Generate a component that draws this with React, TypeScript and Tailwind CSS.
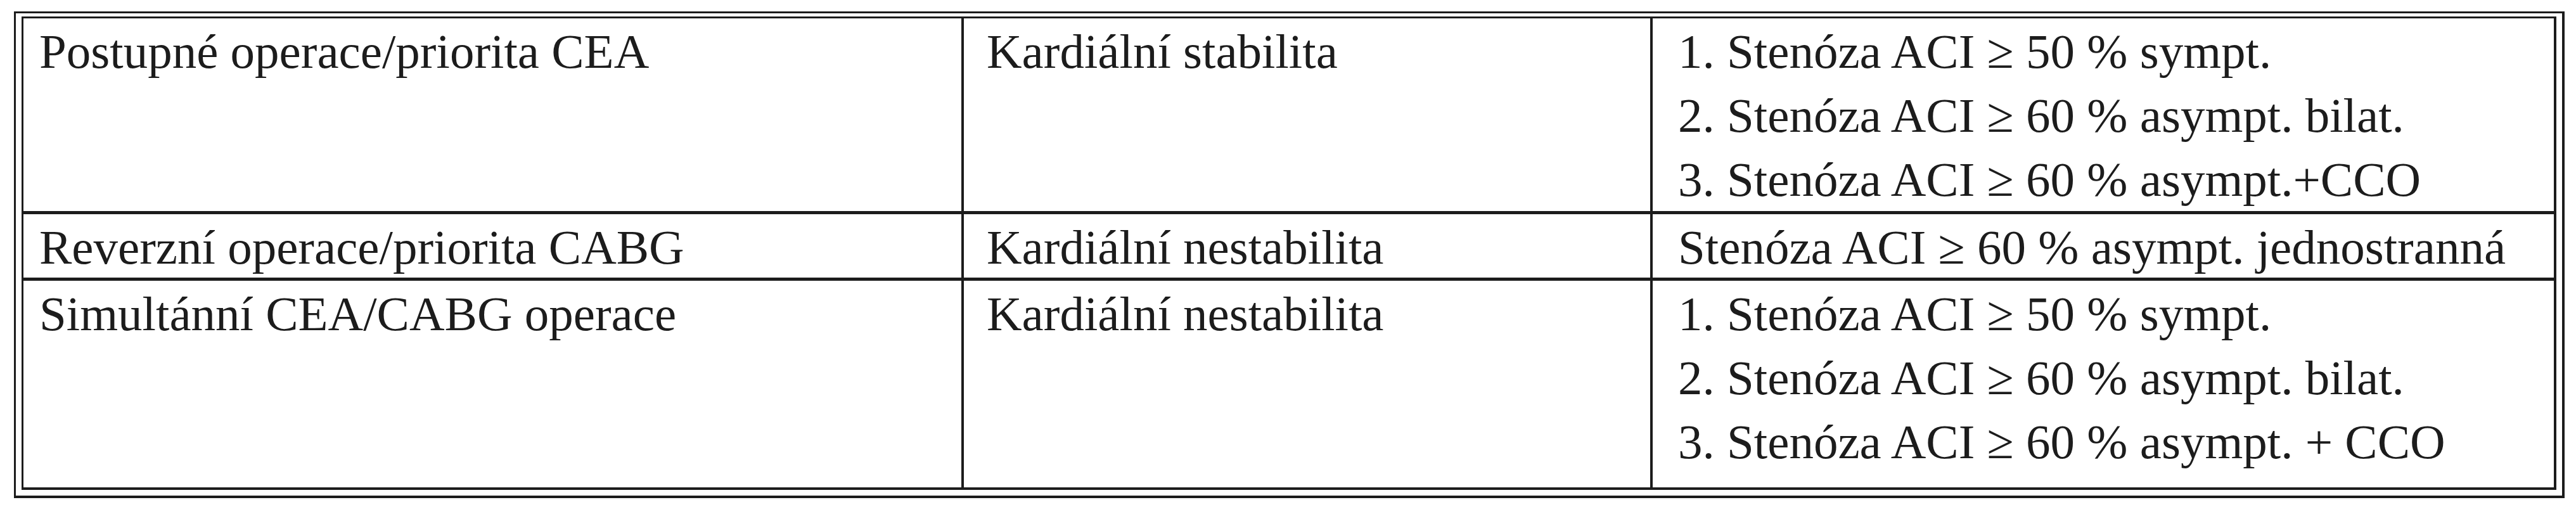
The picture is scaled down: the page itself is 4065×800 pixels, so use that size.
type Row = {
  approach: string;
  cardiac: string;
  indications: string[];
  height: string;
};

const rows: Row[] = [
  {
    approach: 'Postupné operace/priorita CEA',
    cardiac: 'Kardiální stabilita',
    indications: [
      '1. Stenóza ACI ≥ 50 % sympt.',
      '2. Stenóza ACI ≥ 60 % asympt. bilat.',
      '3. Stenóza ACI ≥ 60 % asympt.+CCO',
    ],
    height: 'h-[304px]',
  },
  {
    approach: 'Reverzní operace/priorita CABG',
    cardiac: 'Kardiální nestabilita',
    indications: ['Stenóza ACI ≥ 60 % asympt. jednostranná'],
    height: 'h-[105px] border-t-[5px]',
  },
  {
    approach: 'Simultánní CEA/CABG operace',
    cardiac: 'Kardiální nestabilita',
    indications: [
      '1. Stenóza ACI ≥ 50 % sympt.',
      '2. Stenóza ACI ≥ 60 % asympt. bilat.',
      '3. Stenóza ACI ≥ 60 % asympt. + CCO',
    ],
    height: 'h-[331px] border-t-[5px]',
  },
];

export default function App() {
  return (
    <div className="min-h-[800px] bg-white pl-[22px] pt-[18px] font-['Liberation_Serif','Times_New_Roman',serif] text-[77px] leading-[101px] text-[#1c1c1c]">
      {/* double frame */}
      <div className="w-[4025px] border-[3px] border-b-4 border-r-4 border-[#1c1c1c] px-[9px] pb-[9px] pt-[5px]">
        <div className="flex flex-col border-[3px] border-b-4 border-r-4 border-[#1c1c1c]">
          {rows.map((row, i) => (
            <div key={i} className={`flex border-[#1c1c1c] ${row.height}`}>
              <div className="w-[1480px] shrink-0 pl-[25px] pt-[2px] whitespace-nowrap">
                {row.approach}
              </div>
              <div className="w-[1087px] shrink-0 border-l-4 border-[#1c1c1c] pl-[36px] pt-[2px] whitespace-nowrap">
                {row.cardiac}
              </div>
              <div className="flex-1 border-l-4 border-[#1c1c1c] pl-[40px] pt-[2px]">
                {row.indications.map((line) => (
                  <div key={line} className="whitespace-nowrap">
                    {line}
                  </div>
                ))}
              </div>
            </div>
          ))}
        </div>
      </div>
    </div>
  );
}
